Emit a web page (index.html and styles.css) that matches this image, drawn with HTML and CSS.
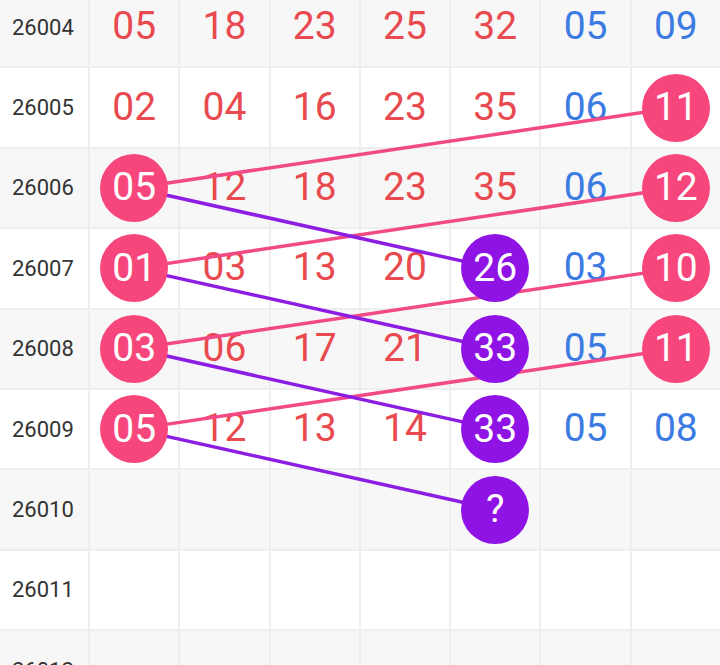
FILE: index.html
```html
<!DOCTYPE html>
<html>
<head>
<meta charset="utf-8">
<link rel="stylesheet" href="styles.css">
</head>
<body>
<div class="board" id="board">
  <div class="grid">
    <div class="lbl alt">26004</div>
    <div class="cell alt"><span class="n r">05</span></div>
    <div class="cell alt"><span class="n r">18</span></div>
    <div class="cell alt"><span class="n r">23</span></div>
    <div class="cell alt"><span class="n r">25</span></div>
    <div class="cell alt"><span class="n r">32</span></div>
    <div class="cell alt"><span class="n b">05</span></div>
    <div class="cell alt"><span class="n b">09</span></div>

    <div class="lbl">26005</div>
    <div class="cell"><span class="n r">02</span></div>
    <div class="cell"><span class="n r">04</span></div>
    <div class="cell"><span class="n r">16</span></div>
    <div class="cell"><span class="n r">23</span></div>
    <div class="cell"><span class="n r">35</span></div>
    <div class="cell"><span class="n b">06</span></div>
    <div class="cell"><span class="ball pink" id="p5b">11</span></div>

    <div class="lbl alt">26006</div>
    <div class="cell alt"><span class="ball pink" id="p6a">05</span></div>
    <div class="cell alt"><span class="n r">12</span></div>
    <div class="cell alt"><span class="n r">18</span></div>
    <div class="cell alt"><span class="n r">23</span></div>
    <div class="cell alt"><span class="n r">35</span></div>
    <div class="cell alt"><span class="n b">06</span></div>
    <div class="cell alt"><span class="ball pink" id="p6b">12</span></div>

    <div class="lbl">26007</div>
    <div class="cell"><span class="ball pink" id="p7a">01</span></div>
    <div class="cell"><span class="n r">03</span></div>
    <div class="cell"><span class="n r">13</span></div>
    <div class="cell"><span class="n r">20</span></div>
    <div class="cell"><span class="ball purple" id="u7">26</span></div>
    <div class="cell"><span class="n b">03</span></div>
    <div class="cell"><span class="ball pink" id="p7b">10</span></div>

    <div class="lbl alt">26008</div>
    <div class="cell alt"><span class="ball pink" id="p8a">03</span></div>
    <div class="cell alt"><span class="n r">06</span></div>
    <div class="cell alt"><span class="n r">17</span></div>
    <div class="cell alt"><span class="n r">21</span></div>
    <div class="cell alt"><span class="ball purple" id="u8">33</span></div>
    <div class="cell alt"><span class="n b">05</span></div>
    <div class="cell alt"><span class="ball pink" id="p8b">11</span></div>

    <div class="lbl">26009</div>
    <div class="cell"><span class="ball pink" id="p9a">05</span></div>
    <div class="cell"><span class="n r">12</span></div>
    <div class="cell"><span class="n r">13</span></div>
    <div class="cell"><span class="n r">14</span></div>
    <div class="cell"><span class="ball purple" id="u9">33</span></div>
    <div class="cell"><span class="n b">05</span></div>
    <div class="cell"><span class="n b">08</span></div>

    <div class="lbl alt">26010</div>
    <div class="cell alt"></div>
    <div class="cell alt"></div>
    <div class="cell alt"></div>
    <div class="cell alt"></div>
    <div class="cell alt"><span class="ball purple" id="u10">?</span></div>
    <div class="cell alt"></div>
    <div class="cell alt"></div>

    <div class="lbl">26011</div>
    <div class="cell"></div>
    <div class="cell"></div>
    <div class="cell"></div>
    <div class="cell"></div>
    <div class="cell"></div>
    <div class="cell"></div>
    <div class="cell"></div>

    <div class="lbl alt">26012</div>
    <div class="cell alt"></div>
    <div class="cell alt"></div>
    <div class="cell alt"></div>
    <div class="cell alt"></div>
    <div class="cell alt"></div>
    <div class="cell alt"></div>
    <div class="cell alt"></div>
  </div>
  <svg class="links" id="links" xmlns="http://www.w3.org/2000/svg"></svg>
</div>
<script src="script.js"></script>
</body>
</html>
```

FILE: styles.css
```css
html, body {
  margin: 0;
  padding: 0;
  background: #ffffff;
  overflow: hidden;
  font-family: Roboto, "Noto Sans", sans-serif;
}

.board {
  position: relative;
  margin-top: -12px;
  width: 720px;
}

.grid {
  display: grid;
  grid-template-columns: 88px repeat(7, 1fr);
  grid-auto-rows: 78.4px;
  gap: 2px;
  background: #eeeeee;
}

.lbl, .cell {
  background: #ffffff;
  display: flex;
  align-items: center;
}

.alt {
  background: #f7f7f7;
}

.lbl {
  padding-left: 12px;
  font-size: 22px;
  color: #333333;
}

.cell {
  justify-content: center;
}

.n {
  font-size: 39px;
  line-height: 1;
  margin-top: -1px;
}

.r { color: #e84a4f; }
.b { color: #3b7be2; }

.ball {
  position: relative;
  z-index: 2;
  width: 68px;
  height: 68px;
  border-radius: 50%;
  display: flex;
  align-items: center;
  justify-content: center;
  color: #ffffff;
  font-size: 39px;
  line-height: 1;
}

.pink { background: #f6467c; }
.purple { background: #9013e6; }

.links {
  position: absolute;
  left: 0;
  top: 0;
  width: 100%;
  height: 100%;
  z-index: 1;
  pointer-events: none;
}
```

FILE: script.js
```js
(function () {
  var board = document.getElementById('board');
  var svg = document.getElementById('links');
  var pairs = [
    ['p6a', 'p5b', '#f24a86'],
    ['p7a', 'p6b', '#f24a86'],
    ['p8a', 'p7b', '#f24a86'],
    ['p9a', 'p8b', '#f24a86'],
    ['p6a', 'u7', '#8c1de2'],
    ['p7a', 'u8', '#8c1de2'],
    ['p8a', 'u9', '#8c1de2'],
    ['p9a', 'u10', '#8c1de2']
  ];
  var br = board.getBoundingClientRect();
  function center(id) {
    var r = document.getElementById(id).getBoundingClientRect();
    return [r.left + r.width / 2 - br.left, r.top + r.height / 2 - br.top];
  }
  pairs.forEach(function (p) {
    var a = center(p[0]);
    var b = center(p[1]);
    var l = document.createElementNS('http://www.w3.org/2000/svg', 'line');
    l.setAttribute('x1', a[0]);
    l.setAttribute('y1', a[1]);
    l.setAttribute('x2', b[0]);
    l.setAttribute('y2', b[1]);
    l.setAttribute('stroke', p[2]);
    l.setAttribute('stroke-width', '3.5');
    svg.appendChild(l);
  });
})();
```
